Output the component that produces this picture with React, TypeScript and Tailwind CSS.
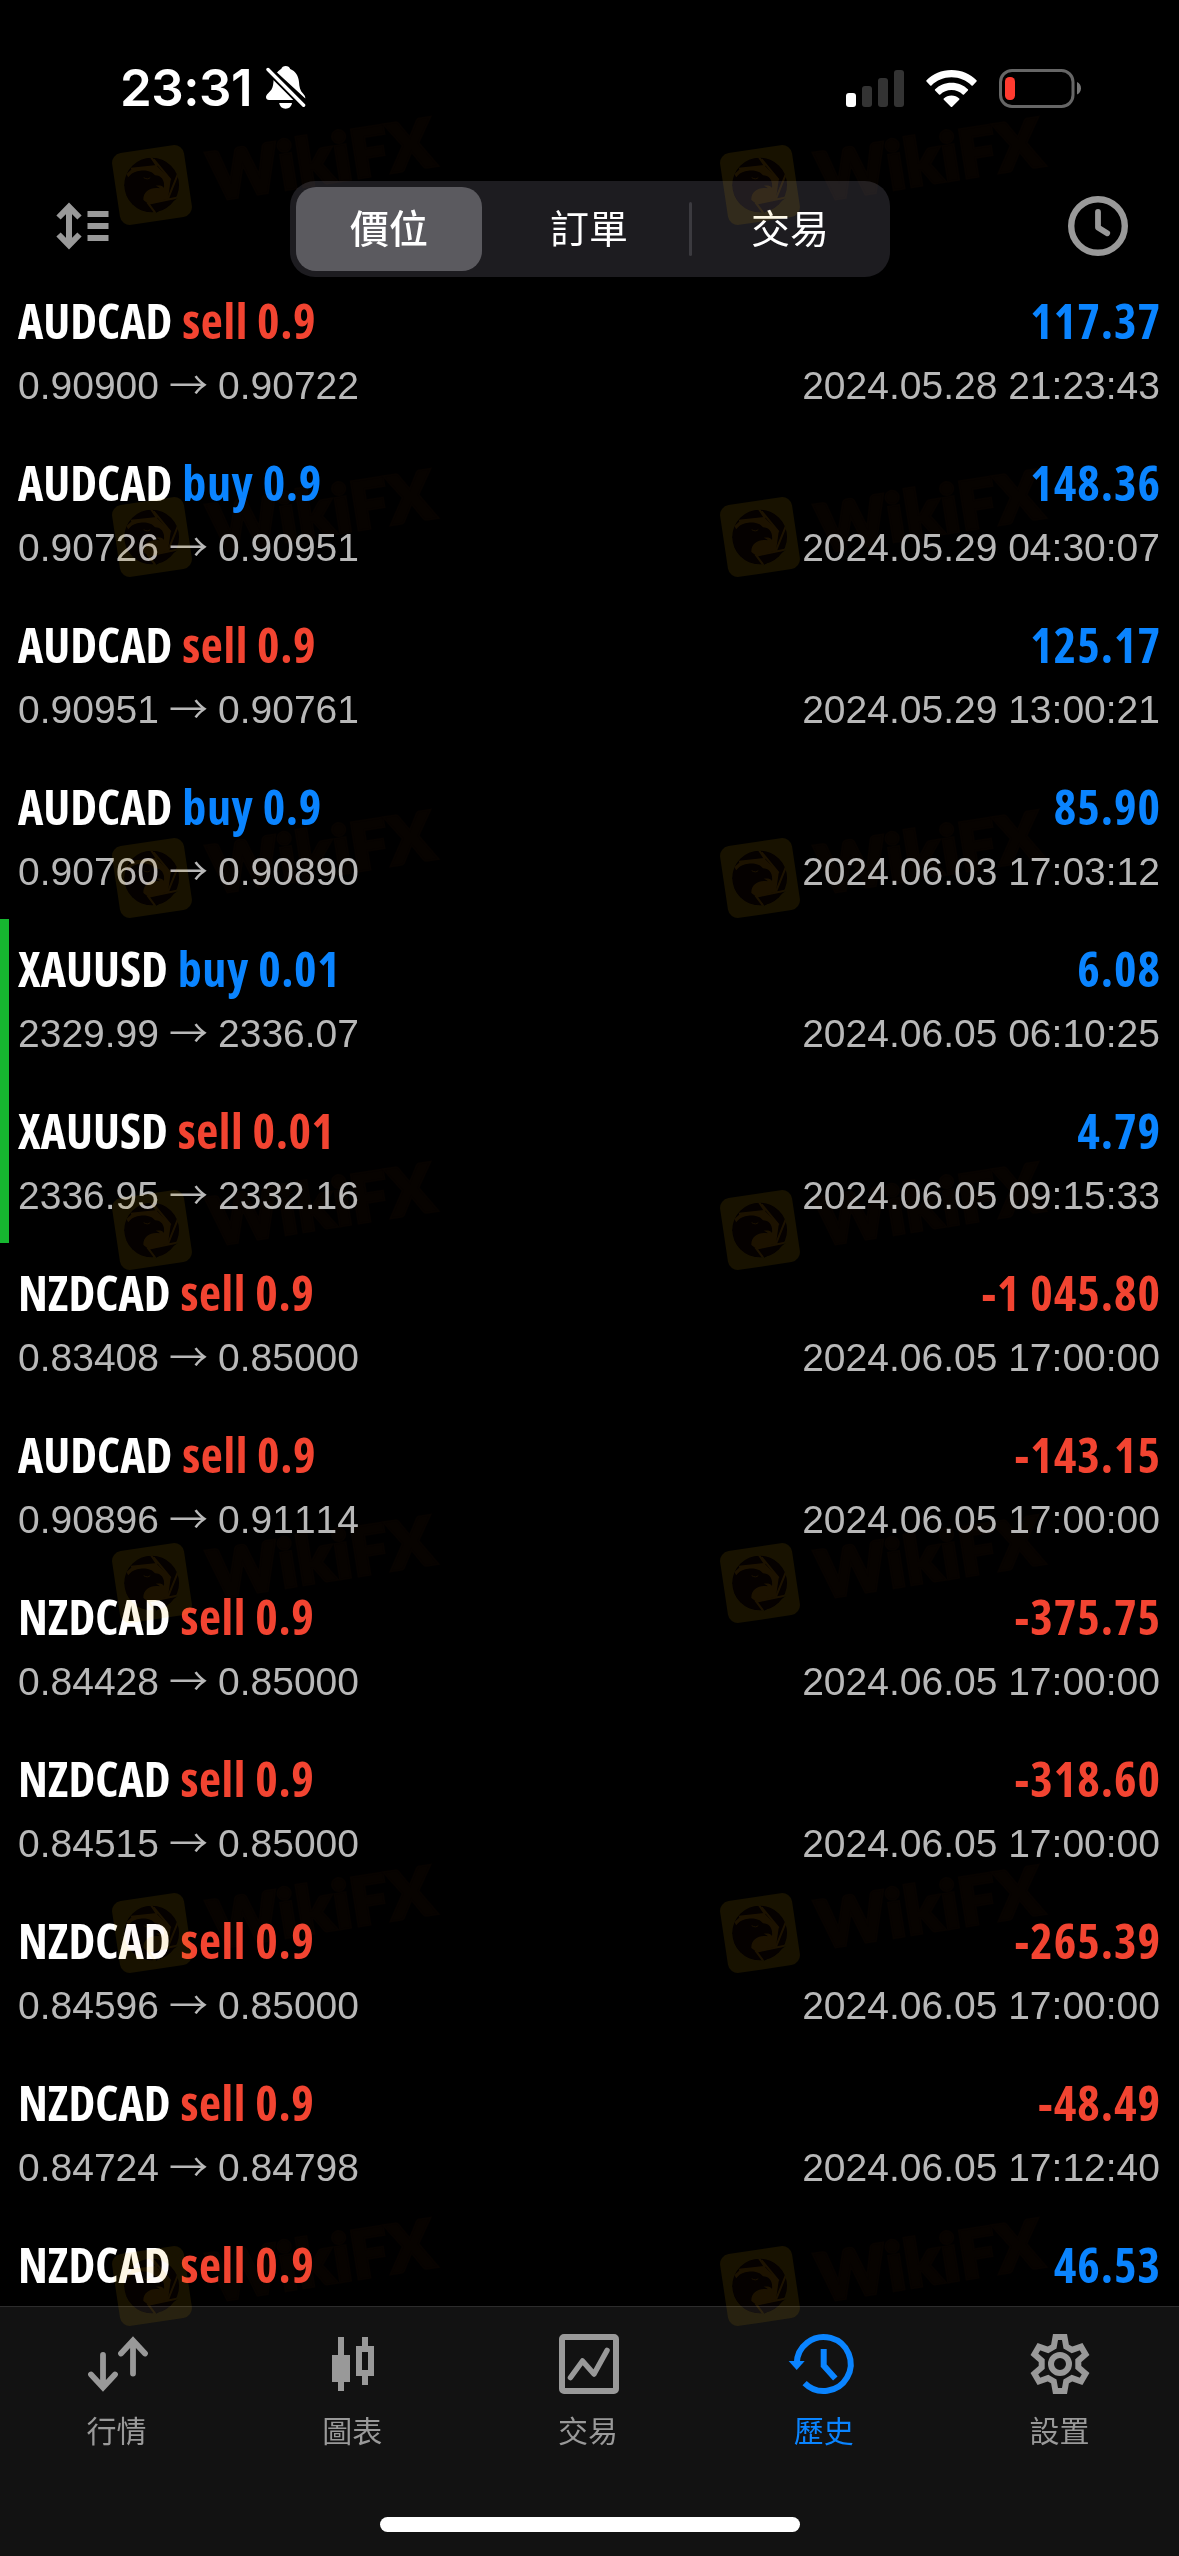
import type { ReactNode } from "react"
import clsx from "clsx"

type Deal = {
  symbol: string
  side: "buy" | "sell"
  volume: string
  open: string
  close: string
  profit: string
  time: string
  marked?: boolean
}

const deals: Deal[] = [
  { symbol: "AUDCAD", side: "sell", volume: "0.9", open: "0.90900", close: "0.90722", profit: "117.37", time: "2024.05.28 21:23:43" },
  { symbol: "AUDCAD", side: "buy", volume: "0.9", open: "0.90726", close: "0.90951", profit: "148.36", time: "2024.05.29 04:30:07" },
  { symbol: "AUDCAD", side: "sell", volume: "0.9", open: "0.90951", close: "0.90761", profit: "125.17", time: "2024.05.29 13:00:21" },
  { symbol: "AUDCAD", side: "buy", volume: "0.9", open: "0.90760", close: "0.90890", profit: "85.90", time: "2024.06.03 17:03:12" },
  { symbol: "XAUUSD", side: "buy", volume: "0.01", open: "2329.99", close: "2336.07", profit: "6.08", time: "2024.06.05 06:10:25", marked: true },
  { symbol: "XAUUSD", side: "sell", volume: "0.01", open: "2336.95", close: "2332.16", profit: "4.79", time: "2024.06.05 09:15:33", marked: true },
  { symbol: "NZDCAD", side: "sell", volume: "0.9", open: "0.83408", close: "0.85000", profit: "-1 045.80", time: "2024.06.05 17:00:00" },
  { symbol: "AUDCAD", side: "sell", volume: "0.9", open: "0.90896", close: "0.91114", profit: "-143.15", time: "2024.06.05 17:00:00" },
  { symbol: "NZDCAD", side: "sell", volume: "0.9", open: "0.84428", close: "0.85000", profit: "-375.75", time: "2024.06.05 17:00:00" },
  { symbol: "NZDCAD", side: "sell", volume: "0.9", open: "0.84515", close: "0.85000", profit: "-318.60", time: "2024.06.05 17:00:00" },
  { symbol: "NZDCAD", side: "sell", volume: "0.9", open: "0.84596", close: "0.85000", profit: "-265.39", time: "2024.06.05 17:00:00" },
  { symbol: "NZDCAD", side: "sell", volume: "0.9", open: "0.84724", close: "0.84798", profit: "-48.49", time: "2024.06.05 17:12:40" },
  { symbol: "NZDCAD", side: "sell", volume: "0.9", open: "", close: "", profit: "46.53", time: "" },
]

function StatusBar() {
  return (
    <div className="flex h-[170px] items-start justify-between pt-[58px] pr-[97px] pl-[120px]">
      <div className="flex items-center gap-[14px]">
        <span className="font-['Inter',sans-serif] text-[51px] leading-[60px] font-semibold tracking-[-0.5px] text-white">23:31</span>
        <svg className="h-[44px] w-[40px]" viewBox="0 0 40 44" fill="white">
          <path d="M11 6.5C13 4.2 14.800 3 15.200 3C15.800 1.200 17.500 0 19.700 0S23.600 1.200 24.200 3C29.500 5 32.500 10 33 16C33.300 21 34 24.500 37 27.500C38.500 29 39.300 30.500 39.300 32.500Z" />
          <path d="M7.600 14L27.600 34H3C1.200 34 0 32.800 0 31.200C0 28.500 3.500 26.500 5.500 23.500C7.200 20.800 7.300 17.500 7.600 14Z" />
          <path d="M13.200 37H26C25.500 40.500 23 42.700 19.600 42.700S13.700 40.500 13.200 37Z" />
          <path d="M2 3.500L37.600 39.200" stroke="black" strokeWidth="7" />
          <path d="M2 3.500L37.600 39.200" stroke="white" strokeWidth="3.400" strokeLinecap="round" />
        </svg>
      </div>
      <div className="flex h-[60px] items-center">
        <div className="flex items-end gap-[6px]">
          <i className="h-[14px] w-[10px] rounded-[3px] bg-white" />
          <i className="h-[21px] w-[10px] rounded-[3px] bg-[#333]" />
          <i className="h-[29px] w-[10px] rounded-[3px] bg-[#333]" />
          <i className="h-[37px] w-[10px] rounded-[3px] bg-[#333]" />
        </div>
        <svg className="ml-[22px] h-[37px] w-[51px]" viewBox="0 0 51 37" fill="white">
          <path d="M25.500 0C35.500 0 44.300 4 50.500 10.300C50.900 10.700 50.900 11.200 50.500 11.600L46.800 15.400C46.400 15.800 45.900 15.800 45.500 15.400C40.300 10.300 33.300 7.300 25.500 7.300S10.700 10.300 5.500 15.400C5.100 15.800 4.600 15.800 4.200 15.400L.5 11.600C.1 11.200 .1 10.700 .5 10.300C6.700 4 15.500 0 25.500 0Z" />
          <path d="M25.500 12.700C32 12.700 37.800 15.200 41.900 19.300C42.300 19.700 42.300 20.200 41.900 20.600L38 24.500C37.600 24.900 37.100 24.900 36.700 24.500C33.800 21.700 29.900 20 25.500 20S17.200 21.700 14.300 24.500C13.900 24.900 13.400 24.900 13 24.500L9.100 20.600C8.700 20.200 8.700 19.700 9.100 19.300C13.200 15.200 19 12.700 25.500 12.700Z" />
          <path d="M25.500 25.500C28.500 25.500 31.200 26.600 33.200 28.400C33.600 28.800 33.600 29.300 33.200 29.700L26.200 36.700C25.800 37.100 25.200 37.100 24.800 36.700L17.800 29.700C17.400 29.300 17.400 28.800 17.800 28.400C19.800 26.600 22.500 25.500 25.500 25.500Z" />
        </svg>
        <svg className="ml-[22px] h-[39px] w-[83px]" viewBox="0 0 83 39">
          <rect x="1.500" y="1.500" width="72.500" height="36" rx="11.500" fill="none" stroke="#666" strokeWidth="3" />
          <rect x="6" y="8" width="10" height="23" rx="4.500" fill="#ff3b30" />
          <path d="M78 13C80.500 14 82 16.500 82 19.200S80.500 24.500 78 25.500Z" fill="#777" />
        </svg>
      </div>
    </div>
  )
}

function Header() {
  return (
    <div className="flex h-[101px] items-start pr-[51px] pl-[56px]">
      <button className="mt-[32px]" aria-label="Sort">
        <svg className="h-[48px] w-[53px]" viewBox="0 0 53 48" fill="none" stroke="#999" strokeWidth="6">
          <path d="M13 5V43M2.500 15.500L13 4.800L23.500 15.500M2.500 32.500L13 43.200L23.500 32.500" />
          <path d="M31.500 12H52.500M31.500 24H52.500M31.500 36H52.500" />
        </svg>
      </button>
      <div className="mt-[11px] ml-[181px] flex h-[96px] w-[600px] items-center rounded-[25px] bg-[#1d1c20] font-['Noto_Sans_CJK_TC',sans-serif] text-[39px] leading-[60px] text-white">
        <div className="flex w-[199px] pl-[6px]">
          <div className="h-[84px] w-[186px] rounded-[20px] bg-[#5b5a5f] pt-[9px] text-center font-medium">價位</div>
        </div>
        <div className="w-[200px] pb-[6px] text-center">訂單</div>
        <div className="h-[54px] w-[3px] rounded-full bg-[#3b3a3f]" />
        <div className="w-[196px] pb-[6px] text-center">交易</div>
      </div>
      <button className="mt-[26px] ml-auto" aria-label="Period">
        <svg className="h-[60px] w-[60px]" viewBox="0 0 60 60" fill="none" stroke="#999" strokeLinecap="round" strokeLinejoin="round">
          <circle cx="30" cy="30" r="26.800" strokeWidth="6.400" />
          <path d="M30 16V31.500L39.200 37.300" strokeWidth="5.800" />
        </svg>
      </button>
    </div>
  )
}

function DealRow({ deal }: { deal: Deal }) {
  return (
    <div className={clsx("flex h-[162px] shrink-0 justify-between border-l-9 pt-[20px] pr-[18px] pl-[9px]", deal.marked ? "border-[#16b730]" : "border-transparent")}>
      <div>
        <div className="flex gap-[10px] font-['Open_Sans',sans-serif] text-[48px] leading-[60px] font-[660] whitespace-nowrap [font-stretch:77.5%]">
          <span className="text-white">{deal.symbol}</span>
          <span className={clsx("tracking-[0.6px]", deal.side === "buy" ? "text-[#0a84ff]" : "text-[#f24431]")}>
            {deal.side} {deal.volume}
          </span>
        </div>
        {deal.open && (
          <div className="mt-[7px] flex gap-[10px] text-[39px] leading-[56px] text-[#b8b8b8] [font-kerning:none]">
            <span>{deal.open}</span>
            <span className="h-[50px] font-['Noto_Sans_CJK_TC',sans-serif] leading-[49px] font-[350]">→</span>
            <span>{deal.close}</span>
          </div>
        )}
      </div>
      <div className="text-right">
        <div
          className={clsx(
            "font-['Open_Sans',sans-serif] text-[48px] leading-[60px] font-[660] tracking-[1px] whitespace-nowrap [font-stretch:80%]",
            deal.profit.startsWith("-") ? "text-[#f24431]" : "text-[#0a84ff]"
          )}
        >
          {deal.profit}
        </div>
        <div className="mt-[7px] mr-px text-[39px] leading-[56px] text-[#b8b8b8] [font-kerning:none]">{deal.time}</div>
      </div>
    </div>
  )
}

function Tab({ label, active, children }: { label: string; active?: boolean; children: ReactNode }) {
  return (
    <div className={clsx("flex flex-1 flex-col items-center pt-[24px]", active ? "text-[#0a84ff]" : "text-[#999]")}>
      <svg className="h-[66px] w-[66px] overflow-visible" viewBox="0 0 66 66" fill="none" stroke="currentColor" strokeWidth="6">
        {children}
      </svg>
      <span className="mt-[10px] mr-[3px] font-['Noto_Sans_CJK_TC',sans-serif] text-[30px] leading-[44px]">{label}</span>
    </div>
  )
}

function TabBar() {
  return (
    <div className="h-[250px] border-t border-[#2c2c2c] bg-[#121212]">
      <div className="flex h-[210px]">
        <Tab label="行情">
          <path d="M18 24V56M6 43.500L18 56.500L30 43.500M48 42.500V10M36 22.500L48 9.500L60 22.500" strokeWidth="5.800" strokeLinecap="round" />
        </Tab>
        <Tab label="圖表">
          <path d="M20 6V60M44 6V18M44 42V54" />
          <path d="M11 24H29V51H11Z" fill="currentColor" stroke="none" />
          <path d="M38 18H50V42H38Z" />
        </Tab>
        <Tab label="交易">
          <rect x="6" y="6" width="54" height="54" rx="2" />
          <path d="M14.500 46.500L26.500 30L38 43L51 19.500" strokeWidth="5.500" strokeLinecap="round" strokeLinejoin="round" />
        </Tab>
        <Tab label="歷史" active>
          <path d="M4.700 33A27 27 0 1 1 12.600 52.100" />
          <path d="M31.700 18V34.500L43.300 47.500" />
          <path d="M-3.300 30H12.700L4.700 39Z" fill="currentColor" stroke="none" />
        </Tab>
        <Tab label="設置">
          <g transform="translate(32 33)">
            <path d="M-4.500 -27H4.500L6.200 -17.500L12 -14.100L21.100 -17.400L25.600 -9.600L18.300 -3.400V3.400L25.600 9.600L21.100 17.400L12 14.100L6.200 17.500L4.500 27H-4.500L-6.200 17.500L-12 14.100L-21.100 17.400L-25.600 9.600L-18.300 3.400V-3.400L-25.600 -9.600L-21.100 -17.400L-12 -14.100L-6.200 -17.500Z" />
            <circle r="9" />
          </g>
        </Tab>
      </div>
      <div className="mx-auto h-[15px] w-[420px] rounded-full bg-white" />
    </div>
  )
}

function Watermark() {
  return (
    <div className="relative h-[82px] w-[330px]">
      <svg className="h-[82px] w-[82px]" viewBox="34 280 246 246">
        <mask id="eagle">
          <rect x="48" y="294" width="218" height="218" rx="30" transform="rotate(-8.500 157 403)" fill="white" />
          <circle cx="156" cy="403" r="82" fill="black" />
          <path d="M80 370L98 354L172 346L213 388L205 444L146 459L120 440Z" fill="white" />
          <path d="M172 346L153 318M162 326L213 388M238 362L205 444M238 440L146 459L168 488M172 346L94 354" stroke="white" strokeWidth="6" />
          <path d="M74 405C80 380 96 362 122 360C140 358 158 362 166 374C184 374 196 388 193 412C188 404 180 404 168 405C176 409 180 410 180 413C156 408 130 420 131 448C132 464 142 476 150 485L128 478L124 462L120 474L106 464V448L98 456L88 440L94 428L80 430L90 412Z" fill="black" />
          <path d="M132 381C140 386 148 386 152 380" stroke="white" strokeWidth="3" fill="none" />
        </mask>
        <rect x="34" y="280" width="246" height="246" mask="url(#eagle)" fill="rgb(240 180 0 / 0.1)" />
        <circle cx="156" cy="403" r="82" fill="rgb(230 60 0 / 0.025)" />
      </svg>
      <span className="absolute top-[-9px] left-[98px] origin-left -rotate-9 font-['Lato',sans-serif] text-[66px] leading-[82px] font-black tracking-[1px] text-[#080300] opacity-80 [-webkit-text-stroke:4px_#080300] [paint-order:stroke] mix-blend-screen">
        WikiFX
      </span>
    </div>
  )
}

// vertical offset of every watermark line on the screen
const watermarkRows = [144, 496, 837, 1189, 1542, 1892, 2245]

export default function App() {
  return (
    <div className="relative h-[2556px] w-[1179px] overflow-hidden bg-black font-['Liberation_Sans',Arial,sans-serif]">
      <StatusBar />
      <Header />
      <div className="flex h-[2035px] flex-col overflow-hidden">
        {deals.map((deal, i) => (
          <DealRow key={i} deal={deal} />
        ))}
      </div>
      <TabBar />
      {watermarkRows.map((top) => (
        <div key={top} className="pointer-events-none absolute left-[111px] flex gap-[278px]" style={{ top }}>
          <Watermark />
          <Watermark />
        </div>
      ))}
    </div>
  )
}
